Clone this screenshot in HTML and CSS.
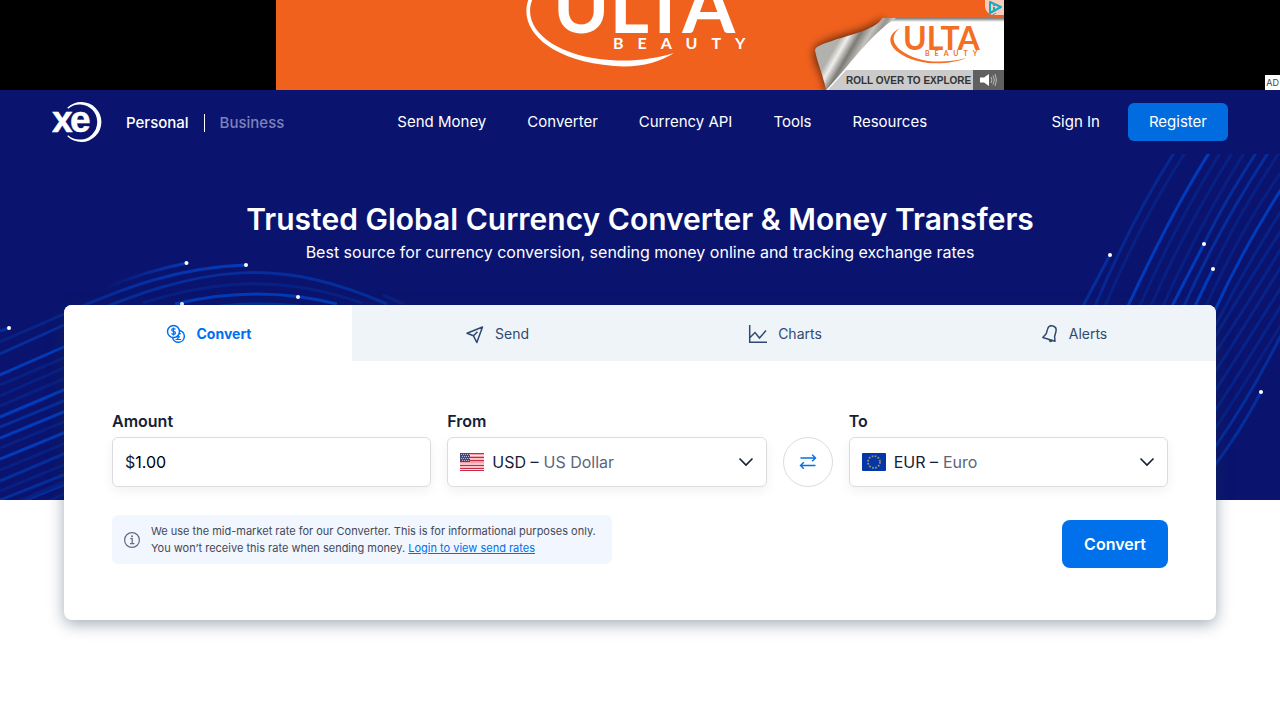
FILE: index.html
```html
<!DOCTYPE html>
<html lang="en">
<head>
<meta charset="utf-8">
<meta name="viewport" content="width=device-width, initial-scale=1">
<title>Xe Currency Converter</title>
<link rel="stylesheet" href="styles.css">
</head>
<body>
<aside class="ad" aria-label="Advertisement">
  <a class="ad-link" href="#">
    <svg class="ad-art" viewBox="0 0 728 90" role="img" aria-label="Ulta Beauty">
      <defs>
        <linearGradient id="curl" gradientUnits="userSpaceOnUse" x1="545" y1="45" x2="592" y2="72">
          <stop offset="0" stop-color="#b4b2ad"/><stop offset=".24" stop-color="#b2b0ab"/><stop offset=".36" stop-color="#eeeeec"/>
          <stop offset=".52" stop-color="#7d7a74"/><stop offset=".68" stop-color="#c4c3c0"/><stop offset=".82" stop-color="#96948f"/><stop offset="1" stop-color="#f4f4f4"/>
        </linearGradient>
        <linearGradient id="edge" x1="0" y1="0" x2="0" y2="1"><stop offset="0" stop-color="#777"/><stop offset="1" stop-color="#fff"/></linearGradient>
        <filter id="soft" x="-30%" y="-30%" width="160%" height="160%"><feGaussianBlur stdDeviation="5"/></filter>
      </defs>
      <rect width="728" height="90" fill="#f1611e"/>
      <g fill="#fff">
        <text class="ulta-large" x="277" y="33">ULTA</text>
        <text class="beauty-large" x="337" y="49">BEAUTY</text>
        <path d="M254 -4C240 24 266 60 338 66C362 68 382 63 398 53C378 59 356 62 334 60C276 56 242 26 258 -4Z"/>
      </g>
      <path d="M607 18C590 34 560 34 540 47C534 62 549 72 550 92L610 92Z" fill="#000" opacity=".65" filter="url(#soft)"/>
      <path d="M607 18H728V90H550Z" fill="#fff"/>
      <rect x="607" y="18" width="121" height="4" fill="url(#edge)"/>
      <path d="M570 70H697V90H552Z" fill="#cbcbcb"/>
      <path d="M607 18C598 31 568 36 556 41C547 44 540 46 539 50C541 62 548 78 550 90C572 68 592 36 620 18Z" fill="url(#curl)"/>
      <g fill="#f26f24">
        <text class="ulta-small" x="627" y="50">ULTA</text>
        <text class="beauty-small" x="649" y="56">BEAUTY</text>
        <path d="M624 28C602 39 620 59 652 63C668 64 682 62 690 58C676 62 662 62 652 61C624 56 608 40 624 28Z"/>
      </g>
      <text class="explore" x="570" y="84">ROLL OVER TO EXPLORE</text>
      <rect x="697" y="70" width="31" height="20" fill="#606060"/>
      <path d="M704 77.500H708L713 74V86L708 82.500H704Z" fill="#fff"/>
      <path d="M715 77Q717 80 715 83M717 75.500Q720 80 717 84.500M719 74Q722 80 719 86" fill="none" stroke="#d0d0d0" stroke-width=".8"/>
      <path d="M709 0H728V15H716Q710 13 709 7Z" fill="#f9cdb9"/>
      <path d="M714 2L725 7L714 13Z" fill="none" stroke="#16abc4" stroke-width="2" stroke-linejoin="round"/>
      <path d="M718 5V6M718 7V11" stroke="#16abc4" stroke-width="2"/>
      <path d="M710 19L720 13M711 13L719 19" stroke="#997f70" stroke-width="1"/>
    </svg>
  </a>
  <span class="ad-tag">AD</span>
</aside>

<header class="header">
  <a class="logo" href="#" aria-label="Xe">
    <svg viewBox="0 0 50 40" width="50" height="40" aria-hidden="true">
      <text class="logo-text" y="30"><tspan x="0">x</tspan><tspan x="18">e</tspan></text>
      <path d="M15.300 5.800A20 20 0 1 1 15.300 34.200L16.100 33.300A17.600 17.600 0 1 0 16.100 6.700Z" fill="#fff"/>
    </svg>
  </a>
  <div class="audience">
    <a class="audience-link" href="#">Personal</a>
    <a class="audience-link muted" href="#">Business</a>
  </div>
  <nav class="nav" aria-label="Main">
    <a href="#">Send Money</a>
    <a href="#">Converter</a>
    <a href="#">Currency API</a>
    <a href="#">Tools</a>
    <a href="#">Resources</a>
  </nav>
  <div class="account">
    <a href="#">Sign In</a>
    <a class="register" href="#">Register</a>
  </div>
</header>

<main class="hero">
  <div class="waves" aria-hidden="true">
    <svg class="wave-left" viewBox="0 154 430 346">
      <defs>
        <linearGradient id="fade" gradientUnits="userSpaceOnUse" x1="105" y1="0" x2="187" y2="0"><stop offset="0" stop-color="#0a146e"/><stop offset="1" stop-color="#0638b4"/></linearGradient>
        <linearGradient id="rise" gradientUnits="userSpaceOnUse" x1="0" y1="0" x2="246" y2="0"><stop offset="0" stop-color="#091f80"/><stop offset="1" stop-color="#033cbc"/></linearGradient>
      </defs>
      <path d="M105 288Q146 271 187 263" stroke="url(#fade)"/>
      <path d="M0 342L64 314C125 287 180 267 246 265" stroke="url(#rise)"/>
      <path class="mid" d="M0 331L9 328"/>
      <path class="mid" d="M0 354L64 325C210 258 284 260 387 304"/>
      <path class="dim" d="M143 303C225 277 292 278 362 303M383 295L404 304"/>
      <path class="bright" d="M175 304Q258 284 337 304"/>
      <path class="mid" d="M220 306Q260 302 300 306"/>
      <path class="bright" d="M0 375L66 346M0 417L66 389M0 438L66 411M0 459L66 432"/>
      <path class="mid" d="M0 427L66 400M0 481L66 453M0 500L66 474M26 500L66 484"/>
      <path class="dim" d="M0 385L66 357M0 396L66 367M0 406L66 378M0 448L66 421M0 470L66 443M0 491L66 464M10 505L66 481M40 505L66 493"/>
      <g class="dots"><circle cx="9" cy="328" r="2"/><circle cx="186.500" cy="263" r="2"/><circle cx="246" cy="265" r="2"/><circle cx="298" cy="297" r="2"/><circle cx="182" cy="304" r="2"/></g>
    </svg>
    <svg class="wave-right" viewBox="1040 154 240 346">
      <path class="mid" d="M1174 153Q1134 215 1095 306" opacity=".75"/>
      <path class="dim" d="M1185 153Q1144 215 1105 306"/>
      <path class="mid" d="M1110 255L1083 306"/>
      <path class="bright" d="M1209 153C1178 202 1154 250 1128 306"/>
      <path class="dim" d="M1220 153C1188 205 1164 250 1140 306M1232 153C1200 205 1175 250 1151 306M1244 153C1212 205 1188 250 1163 306"/>
      <path class="mid" d="M1256 153C1238 181 1219 212 1204 244M1268 153C1234 205 1209 250 1184 306"/>
      <path class="bright" d="M1204 244L1172 306M1213 269L1195 306M1282 188Q1244 247 1215 310"/>
      <path class="dim" d="M1279 153C1252 194 1229 234 1213 269M1284 168C1250 216 1228 258 1206 306"/>
      <path class="mid" opacity=".6" d="M1282 210Q1246 266 1215 326M1282 229Q1246 285 1215 337M1282 247Q1248 304 1215 353M1282 265Q1248 321 1215 372M1282 286Q1248 340 1215 391M1282 304Q1248 360 1215 411"/>
      <path class="dim" d="M1282 323Q1248 379 1215 429"/>
      <path class="mid" d="M1282 333Q1252 394 1215 447M1261 392Q1240 432 1215 465"/>
      <g class="dots"><circle cx="1110" cy="255" r="2"/><circle cx="1204" cy="244" r="2"/><circle cx="1213" cy="269" r="2"/><circle cx="1261" cy="392" r="2"/></g>
    </svg>
  </div>

  <h1 class="title">Trusted Global Currency Converter &amp; Money Transfers</h1>
  <p class="subtitle">Best source for currency conversion, sending money online and tracking exchange rates</p>

  <section class="card">
    <div class="tabs" role="tablist">
      <button class="tab active" type="button" role="tab" aria-selected="true">
        <svg class="icon" viewBox="0 0 20 20" aria-hidden="true">
          <circle cx="7.500" cy="7.500" r="6"/><path d="M13.700 6.500A6 6 0 1 1 6.500 13.700"/>
          <path d="M9.500 5.500C8.500 4.200 5.700 4.500 5.700 6C5.700 7.900 9.500 7 9.500 9C9.500 10.700 6.500 10.800 5.500 9.400M7.500 3.500V11.500" stroke-width="1.200"/>
          <path d="M15 10C13.300 9 12.300 10 12.300 12.500Q12.300 14.500 10.800 15.500H15M10.600 12.900H14" stroke-width="1.200"/>
        </svg>
        Convert
      </button>
      <button class="tab" type="button" role="tab" aria-selected="false">
        <svg class="icon" viewBox="0 0 20 20" aria-hidden="true"><path d="M2 9.200L17.500 3L11.800 18.500L8.500 11.800ZM8.500 11.800L12.500 7.800" stroke-linejoin="round"/></svg>
        Send
      </button>
      <button class="tab" type="button" role="tab" aria-selected="false">
        <svg class="icon" viewBox="0 0 20 20" aria-hidden="true"><path d="M1.700 1V18.300H19M2 13.500L7 8.500L11.500 14L18 6.500"/></svg>
        Charts
      </button>
      <button class="tab" type="button" role="tab" aria-selected="false">
        <svg class="icon" viewBox="0 0 20 20" aria-hidden="true"><path d="M3.800 13.500L7.200 9.800L8.500 5.400C9.300 2.400 11.500 1.400 14 2C16.700 2.800 17.600 5 16.900 7.700L15.600 12.500L16 17.300ZM11.800 1.800L12.200 1M10.100 16.300Q11.800 18.200 12.800 16.900" stroke-linejoin="round"/></svg>
        Alerts
      </button>
    </div>

    <form class="form">
      <div class="fields">
        <div class="field">
          <label for="amount">Amount</label>
          <div class="box"><span>$</span><input id="amount" type="text" inputmode="decimal" value="1.00"></div>
        </div>
        <div class="field">
          <label for="from">From</label>
          <div class="box">
            <svg class="flag" viewBox="0 0 24 18" aria-hidden="true">
              <rect width="24" height="18" rx="1" fill="#f4a0ac"/>
              <path d="M0 .5H24M0 4.500H24M0 7.500H24M0 12.500H24M0 15.500H24M0 17.500H24" stroke="#c72b43"/>
              <path d="M0 2.500H24M0 6H24M0 11H24M0 14H24M0 16.500H24" stroke="#fbe4e7"/>
              <rect width="10" height="9" fill="#484878"/>
              <path d="M1 1.500H10M2 3.500H10M1 5.500H10M2 7.500H10" stroke="#b9b9d0" stroke-dasharray="1 1"/>
            </svg>
            <span class="code">USD –</span>
            <select id="from"><option>US Dollar</option><option>Euro</option></select>
            <svg class="chevron" viewBox="0 0 16 16" aria-hidden="true"><path d="M1.500 4.500L8 11L14.500 4.500"/></svg>
          </div>
        </div>
        <button class="swap" type="button" aria-label="Swap currencies">
          <svg viewBox="0 0 18 18" width="18" height="18" aria-hidden="true"><path d="M1.500 5H16.500M13.200 1.800L16.500 5L13.200 8.200M16.500 12.500H1.500M4.800 9.300L1.500 12.500L4.800 15.700"/></svg>
        </button>
        <div class="field">
          <label for="to">To</label>
          <div class="box">
            <svg class="flag" viewBox="0 0 24 18" aria-hidden="true"><rect width="24" height="18" rx="1" fill="#0536a8"/><circle cx="12" cy="9" r="6" fill="none" stroke="#98966f" stroke-width="1.800" stroke-dasharray="1.700 1.440"/></svg>
            <span class="code">EUR –</span>
            <select id="to"><option>Euro</option><option>US Dollar</option></select>
            <svg class="chevron" viewBox="0 0 16 16" aria-hidden="true"><path d="M1.500 4.500L8 11L14.500 4.500"/></svg>
          </div>
        </div>
      </div>
      <div class="actions">
        <div class="note">
          <svg class="info" viewBox="0 0 16 16" aria-hidden="true"><circle cx="8" cy="8" r="7.400"/><path d="M6.300 6.700H8.200V11.600M6 11.700H10.400"/><circle class="info-dot" cx="8" cy="4.300" r="1"/></svg>
          <p>We use the mid-market rate for our Converter. This is for informational purposes only. You won’t receive this rate when sending money. <a href="#">Login to view send rates</a></p>
        </div>
        <button class="submit" type="submit">Convert</button>
      </div>
    </form>
  </section>
</main>
</body>
</html>
```
FILE: styles.css
```css
* { box-sizing: border-box; }
body {
  margin: 0;
  background: #fff;
  color: #141e37;
  font-family: Inter, "Liberation Sans", sans-serif;
  font-size: 16px;
  line-height: 24px;
}
h1, p { margin: 0; }
a { color: inherit; text-decoration: none; }
button, input, select { font: inherit; color: inherit; }
button { cursor: pointer; border: 0; padding: 0; }

.ad { position: relative; display: flex; justify-content: center; background: #000; }
.ad-link { display: block; width: 100%; max-width: 728px; }
.ad-art { display: block; width: 100%; }
.ad-tag {
  position: absolute;
  right: 0;
  bottom: 0;
  padding: 0 1px;
  background: #fff;
  color: #444;
  font-size: 9px;
  line-height: 15px;
}
.ulta-large { font: 700 76px Lato, sans-serif; }
.beauty-large { font: 700 16px Lato, sans-serif; letter-spacing: 14px; }
.ulta-small { font: 700 32px Lato, sans-serif; }
.beauty-small { font: 700 7px Lato, sans-serif; letter-spacing: 5px; }
.explore { font: 700 10px "Liberation Sans", sans-serif; fill: #333; }

.header {
  display: flex;
  align-items: center;
  height: 64px;
  padding: 0 52px;
  background: #0a146e;
  color: #fff;
  font-size: 15px;
}
.logo svg { display: block; }
.logo-text { font: 700 37px "Liberation Sans", sans-serif; fill: #fff; stroke: #fff; stroke-width: .5px; }
.audience { display: flex; margin: 2px 0 0 24px; line-height: 18px; font-weight: 500; }
.muted { margin-left: 15px; padding-left: 15px; border-left: 1px solid #fff; color: #7d82b9; }
.nav { display: flex; gap: 41px; margin-left: 113px; }
.account { display: flex; align-items: center; gap: 28px; margin-left: auto; }
.register { padding: 7px 21px; border-radius: 6px; background: #006ce0; }

.hero { position: relative; padding: 45px 64px 100px; }
.waves {
  position: absolute;
  inset: 0 0 220px;
  display: flex;
  justify-content: space-between;
  overflow: hidden;
  background: #0a146e;
}
.waves svg { height: 346px; fill: none; stroke-width: 3; }
.waves .dim { stroke: #082083; }
.waves .mid { stroke: #052d9b; }
.waves .bright { stroke: #023bb9; }
.waves .dots { fill: #fff; stroke: none; }

.title { position: relative; color: #fff; font-size: 30px; line-height: 40px; font-weight: 600; text-align: center; }
.subtitle { position: relative; margin-top: 1px; color: #fff; text-align: center; }
.card {
  position: relative;
  margin-top: 41px;
  border-radius: 8px;
  background: #fff;
  box-shadow: 0 4px 16px rgba(24, 48, 78, .4);
}
.tabs { display: grid; grid-template-columns: repeat(4, 1fr); overflow: hidden; border-radius: 8px 8px 0 0; }
.tab {
  display: flex;
  align-items: center;
  justify-content: center;
  gap: 10px;
  height: 56px;
  padding: 2px 0 0 2px;
  background: #eff4f9;
  color: #2f4a70;
  font-size: 14px;
}
.tab.active { background: #fff; color: #006fee; font-weight: 700; }
.icon { width: 20px; height: 20px; fill: none; stroke: currentColor; stroke-width: 1.5; }

.form { padding: 48px 48px 52px; }
.fields { display: grid; grid-template-columns: 1fr 1fr 50px 1fr; gap: 16px; align-items: end; }
.field { display: flex; flex-direction: column; gap: 4px; min-width: 0; }
.field label { font-weight: 600; }
.box {
  display: flex;
  align-items: center;
  height: 50px;
  padding: 0 12px;
  border: 1px solid #dcdcdf;
  border-radius: 6px;
  background: #fff;
  box-shadow: 0 4px 12px rgba(0, 0, 0, .06);
}
.box input { flex: 1; min-width: 0; padding: 0; border: 0; outline: 0; background: none; color: #000; }
.box select { flex: 1; min-width: 0; padding: 0; border: 0; outline: 0; appearance: none; background: none; color: #5c667b; }
.flag { width: 24px; height: 18px; margin-right: 8px; }
.code { margin-right: 5px; }
.chevron { width: 16px; height: 16px; fill: none; stroke: #141e37; stroke-width: 1.6; }
.swap {
  display: flex;
  align-items: center;
  justify-content: center;
  height: 50px;
  border: 1px solid #dcdcdf;
  border-radius: 50%;
  background: #fff;
}
.swap svg { fill: none; stroke: #0071eb; stroke-width: 1.4; }

.actions { display: flex; align-items: flex-start; justify-content: space-between; gap: 24px; margin-top: 28px; }
.note {
  display: flex;
  align-items: center;
  gap: 11px;
  max-width: 500px;
  padding: 8px 12px 7px;
  border-radius: 6px;
  background: #f1f6ff;
  color: #434956;
  font-size: 11px;
  line-height: 17px;
}
.note a { color: #0071eb; text-decoration: underline; }
.info { flex: none; width: 16px; height: 16px; fill: none; stroke: #626c80; stroke-width: 1.2; }
.info-dot { fill: #626c80; stroke: none; }
.submit { height: 48px; margin-top: 5px; padding: 0 22px; border-radius: 8px; background: #0071eb; color: #fff; font-weight: 600; }
```
